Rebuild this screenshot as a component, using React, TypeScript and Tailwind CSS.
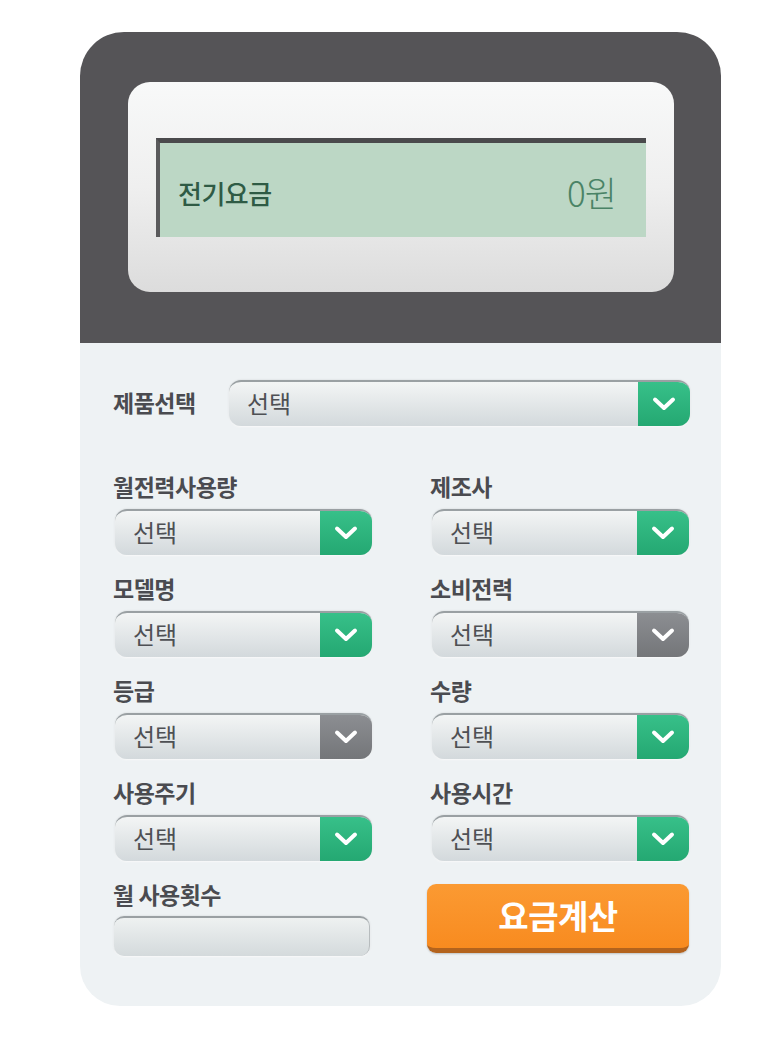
import React from "react";

type TSelectProps = {
	width: string;
	disabled?: boolean;
	height?: string;
};

function Chevron() {
	return (
		<svg width="24" height="16" viewBox="0 0 24 16" fill="none">
			<path d="M3 3.5 L12 12 L21 3.5" stroke="#ffffff" strokeWidth="4" strokeLinecap="round" strokeLinejoin="round" />
		</svg>
	);
}

function Select({ width, disabled }: TSelectProps) {
	return (
		<div
			className={`${width} h-[46px] flex rounded-[12px] overflow-hidden border-t-2 border-t-[#9aa0a3] shadow-[0_1px_2px_rgba(255,255,255,0.9),0_0_2px_rgba(0,0,0,0.15)] bg-gradient-to-b from-[#f3f5f5] to-[#d3d9dc]`}
		>
			<div className="flex-1 flex items-center pl-[18px] text-[24px] text-[#4e5054] mt-[-2px]">선택</div>
			<div
				className={`w-[52px] flex items-center justify-center ${
					disabled
						? "bg-gradient-to-b from-[#8c8e92] to-[#747679]"
						: "bg-gradient-to-b from-[#37c089] to-[#24a872]"
				}`}
			>
				<Chevron />
			</div>
		</div>
	);
}

function Field({ label, disabled }: { label: string; disabled?: boolean }) {
	return (
		<div className="flex flex-col">
			<p className="h-[24px] leading-[24px] text-[23px] font-bold text-[#4a4b50] mb-[11px] tracking-[-0.5px]">{label}</p>
			<div className="pl-[2px]">
				<Select width="w-[257px]" disabled={disabled} />
			</div>
		</div>
	);
}

export default function App() {
	return (
		<div
			className="w-[780px] min-h-[1052px] bg-white pt-[32px] pl-[80px]"
			style={{ fontFamily: '"Noto Sans CJK KR", "Noto Sans", sans-serif' }}
		>
			<div className="w-[641px]">
				{/* 상단 디스플레이 */}
				<div className="h-[311px] bg-[#555457] rounded-t-[44px] pt-[50px] pl-[48px]">
					<div className="w-[546px] h-[210px] rounded-[22px] bg-gradient-to-b from-[#f8f9f9] via-[#efefef] to-[#dcdcdc] pt-[56px] pl-[28px]">
						<div className="w-[490px] h-[99px] bg-[#bcd7c5] border-t-[5px] border-l-[4px] border-t-[#4a4a4c] border-l-[#5a5a5c] flex items-center justify-between pl-[18px] pr-[30px]">
							<p className="text-[26px] font-medium text-[#2f5b45] tracking-[-0.5px] mt-[4px]">전기요금</p>
							<p className="text-[35px] font-light text-[#4a8366] tracking-[-1px] mt-[4px]">0원</p>
						</div>
					</div>
				</div>

				{/* 입력 영역 */}
				<div className="bg-[#eef2f4] rounded-b-[40px] pt-[37px] pb-[50px] pl-[33px] pr-[31px]">
					<div className="flex items-center">
						<p className="w-[116px] text-[23px] font-bold text-[#4a4b50] tracking-[-0.5px] mt-[-2px]">제품선택</p>
						<Select width="w-[461px]" />
					</div>

					<div className="grid grid-cols-[258px_258px] gap-x-[59px] gap-y-[21px] mt-[48px]">
						<Field label="월전력사용량" />
						<Field label="제조사" />
						<Field label="모델명" />
						<Field label="소비전력" disabled />
						<Field label="등급" disabled />
						<Field label="수량" />
						<Field label="사용주기" />
						<Field label="사용시간" />

						<div className="flex flex-col">
							<p className="h-[24px] leading-[24px] text-[23px] font-bold text-[#4a4b50] mb-[10px] tracking-[-0.5px]">월 사용횟수</p>
							<div className="ml-[1px] w-[256px] h-[40px] rounded-[10px] border-t-2 border-t-[#9aa0a3] border-r border-r-[#b7bcbe] shadow-[0_1px_2px_rgba(255,255,255,0.9),0_0_2px_rgba(0,0,0,0.15)] bg-gradient-to-b from-[#eef1f1] to-[#d4dadc]" />
						</div>
						<div className="-ml-[3px] w-[262px] pt-[2px]">
							<button className="w-full h-[69px] rounded-[9px] bg-gradient-to-b from-[#fb9a32] to-[#f88b1f] border-b-[5px] border-b-[#b3631d] text-white text-[33px] font-bold tracking-[-0.5px] shadow-[0_1px_2px_rgba(0,0,0,0.2)]">
								요금계산
							</button>
						</div>
					</div>
				</div>
			</div>
		</div>
	);
}
